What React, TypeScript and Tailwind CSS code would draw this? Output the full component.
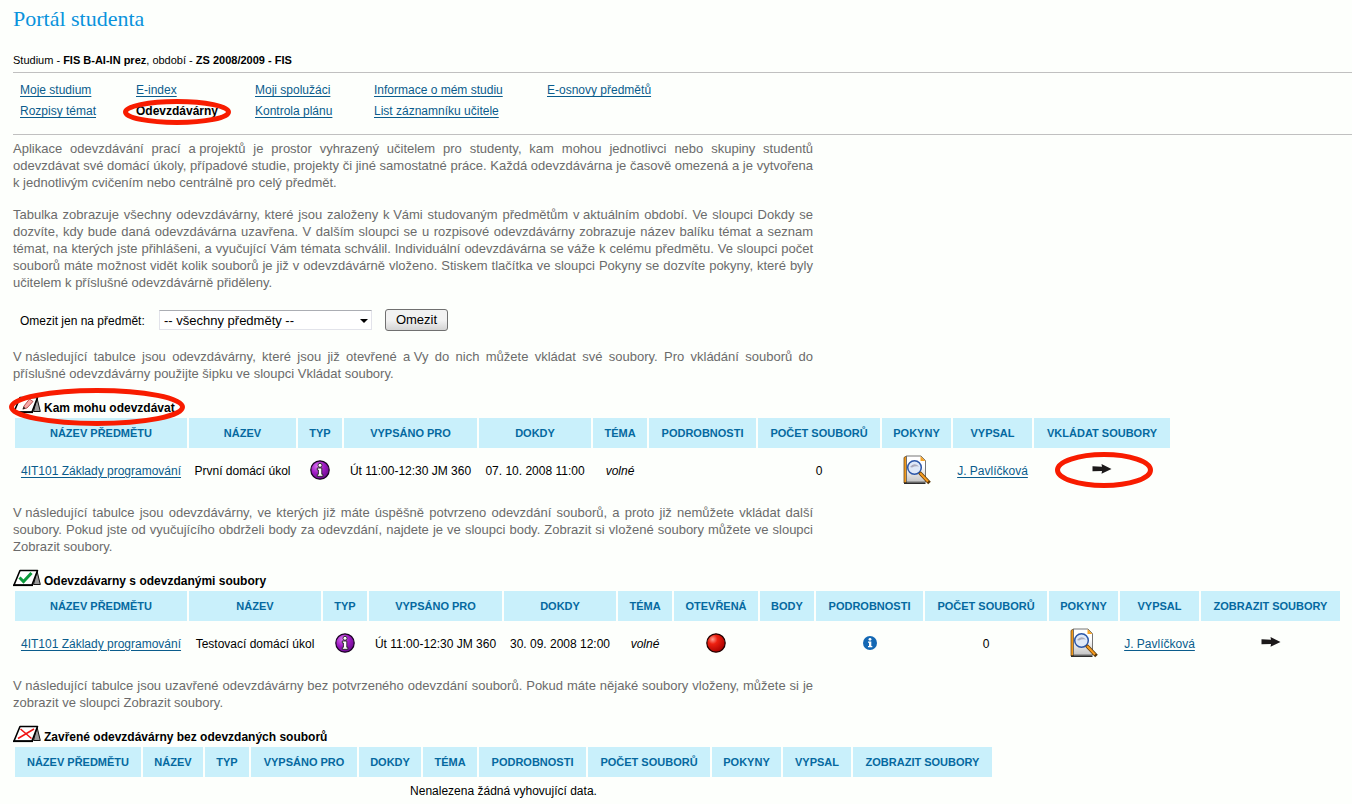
import type { ReactNode } from "react";

const OVAL = "pointer-events-none absolute overflow-visible";

function Oval({ className, rx, ry }: { className: string; rx: number; ry: number }) {
  return (
    <svg
      aria-hidden="true"
      className={`${OVAL} ${className}`}
      width={rx * 2}
      height={ry * 2}
      viewBox={`0 0 ${rx * 2} ${ry * 2}`}
    >
      <ellipse cx={rx} cy={ry} rx={rx - 2.5} ry={ry - 2.5} fill="none" stroke="#f81c00" strokeWidth="5" />
    </svg>
  );
}

function BoardIcon({ kind }: { kind: "edit" | "check" | "cross" }) {
  return (
    <svg aria-hidden="true" width="28" height="18" viewBox="0 0 28 18" className="shrink-0">
      <path d="M24 2 L27.300 15.500 L20.500 15.500 Z" fill="#9a9a9a" stroke="#111" strokeWidth="1" />
      <path d="M7 1.500 H24.500 L19 16 H1 Z" fill="#fff" stroke="#000" strokeWidth="1.600" strokeLinejoin="round" />
      <path d="M0 16.300 H20" stroke="#000" strokeWidth="1.600" />
      {kind === "check" && <path d="M6.500 8.500 L10.500 12.500 L18.500 4" fill="none" stroke="#0c9b3c" strokeWidth="3" />}
      {kind === "cross" && <path d="M7.500 4 L18.500 13.500 M21 4 L5 13.500" fill="none" stroke="#f01414" strokeWidth="1.500" />}
      {kind === "edit" && (
        <>
          <path d="M11 10 L16.500 3 L20 5.500 L14 12 L10 13 Z" fill="#f8a8a8" stroke="#a33" strokeWidth="0.800" />
          <path d="M9.500 13.500 L10.800 10.500 L12.500 12.500 Z" fill="#222" />
        </>
      )}
    </svg>
  );
}

function TypeIcon() {
  return (
    <svg role="img" aria-label="Typ" width="20" height="20" viewBox="0 0 20 20" className="inline-block">
      <defs>
        <radialGradient id="violet" cx="0.350" cy="0.300" r="0.750">
          <stop offset="0" stopColor="#d873f0" />
          <stop offset="0.500" stopColor="#a01cc4" />
          <stop offset="1" stopColor="#6a0a8c" />
        </radialGradient>
      </defs>
      <circle cx="10" cy="10" r="9.200" fill="url(#violet)" stroke="#1a0322" strokeWidth="1.200" />
      <circle cx="10" cy="5.300" r="2" fill="#fff" stroke="#222" strokeWidth="0.900" />
      <path d="M7.300 8 H11.800 V14.300 H12.900 V16.300 H7.300 V14.300 H8.400 V10 H7.300 Z" fill="#fff" stroke="#222" strokeWidth="0.900" />
    </svg>
  );
}

function RedBall() {
  return (
    <svg role="img" aria-label="Ne" width="20" height="20" viewBox="0 0 20 20" className="inline-block">
      <defs>
        <radialGradient id="red" cx="0.320" cy="0.300" r="0.750">
          <stop offset="0" stopColor="#ff9c90" />
          <stop offset="0.350" stopColor="#ee2010" />
          <stop offset="1" stopColor="#a80000" />
        </radialGradient>
      </defs>
      <circle cx="10" cy="10" r="9.200" fill="url(#red)" stroke="#200000" strokeWidth="1.200" />
    </svg>
  );
}

function InfoIcon() {
  return (
    <svg role="img" aria-label="Podrobnosti" width="14" height="14" viewBox="0 0 14 14" className="inline-block">
      <circle cx="7" cy="7" r="7" fill="#1468b4" />
      <circle cx="7" cy="3.300" r="1.400" fill="#fff" />
      <path d="M5 5.500 H8.300 V10 H9.300 V11.300 H5 V10 H6 V6.800 H5 Z" fill="#fff" />
    </svg>
  );
}

function DocIcon() {
  return (
    <svg role="img" aria-label="Pokyny" width="28" height="30" viewBox="0 0 28 30" className="inline-block">
      <defs>
        <linearGradient id="page" x1="0" y1="0" x2="0" y2="1">
          <stop offset="0.400" stopColor="#fff" />
          <stop offset="1" stopColor="#c4c4c4" />
        </linearGradient>
      </defs>
      <path d="M1 2.500 L3.500 1 V28 H1 Z" fill="#f29a1c" stroke="#6b4a1c" strokeWidth="0.800" />
      <path d="M3.500 1 H18 L22.500 5.500 V27 H3.500 Z" fill="url(#page)" stroke="#666" strokeWidth="0.900" />
      <path d="M1 28.200 H22.500" stroke="#222" strokeWidth="1.500" />
      <path d="M17.500 1 V6 H22.500 Z" fill="#f5a52a" />
      <circle cx="11.500" cy="12.500" r="6.800" fill="#dfe9f8" stroke="#2b56a8" strokeWidth="1.500" />
      <path d="M7 12 Q11 7 16 11.500 Q12 10.500 9 12.500 Z" fill="#aab" />
      <path d="M16.500 17.500 L26.500 28" stroke="#5a3708" strokeWidth="3.600" />
      <path d="M17 18 L25 26.500" stroke="#f59a1e" strokeWidth="2.200" />
    </svg>
  );
}

function ArrowIcon() {
  return (
    <svg aria-hidden="true" width="20" height="10" viewBox="0 0 20 10" className="block">
      <path d="M0.500 2.200 L10 2.700 L9.500 0 L19.500 5 L9.500 9.700 L10 7 L0.500 7.300 Z" fill="#1c191a" />
    </svg>
  );
}

/* Single-letter prepositions stay with the word that follows them. */
function Keep({ children }: { children: string }) {
  return <span className="inline-block">{children}</span>;
}

function Para({ children }: { children: ReactNode }) {
  return <p className="max-w-[800px] text-justify text-[13px] leading-[17px] text-[#6b6b6b]">{children}</p>;
}

function TextLink({ children }: { children: ReactNode }) {
  return (
    <a href="#" className="text-[#0a5c8c] underline underline-offset-2">
      {children}
    </a>
  );
}

type Column = { label: string; width: string };

function DataTable({ id, columns, children }: { id: string; columns: Column[]; children: ReactNode }) {
  return (
    <table aria-labelledby={id} className="w-0 table-fixed border-separate border-spacing-[2px] whitespace-nowrap text-center">
      <colgroup>
        {columns.map((c) => (
          <col key={c.label} className={c.width} />
        ))}
      </colgroup>
      <thead>
        <tr>
          {columns.map((c) => (
            <th key={c.label} scope="col" className="h-[30px] bg-[#c9f0fb] p-0 text-[11px] font-bold text-[#0569a0]">
              {c.label}
            </th>
          ))}
        </tr>
      </thead>
      <tbody>{children}</tbody>
    </table>
  );
}

function SectionTitle({ id, kind, circled, children }: { id: string; kind: "edit" | "check" | "cross"; circled?: boolean; children: string }) {
  return (
    <h2 id={id} className="relative mb-px flex w-fit items-center gap-[3px] font-bold leading-5">
      <BoardIcon kind={kind} />
      <span className="pt-[6px] leading-[14px]">{children}</span>
      {circled && <Oval className="-left-1 -top-[7px]" rx={88} ry={19} />}
    </h2>
  );
}

const openColumns: Column[] = [
  { label: "NÁZEV PŘEDMĚTU", width: "w-[172px]" },
  { label: "NÁZEV", width: "w-[107px]" },
  { label: "TYP", width: "w-[44px]" },
  { label: "VYPSÁNO PRO", width: "w-[133px]" },
  { label: "DOKDY", width: "w-[112px]" },
  { label: "TÉMA", width: "w-[54px]" },
  { label: "PODROBNOSTI", width: "w-[107px]" },
  { label: "POČET SOUBORŮ", width: "w-[122px]" },
  { label: "POKYNY", width: "w-[69px]" },
  { label: "VYPSAL", width: "w-[79px]" },
  { label: "VKLÁDAT SOUBORY", width: "w-[136px]" },
];

const submittedColumns: Column[] = [
  { label: "NÁZEV PŘEDMĚTU", width: "w-[172px]" },
  { label: "NÁZEV", width: "w-[132px]" },
  { label: "TYP", width: "w-[44px]" },
  { label: "VYPSÁNO PRO", width: "w-[133px]" },
  { label: "DOKDY", width: "w-[112px]" },
  { label: "TÉMA", width: "w-[54px]" },
  { label: "OTEVŘENÁ", width: "w-[84px]" },
  { label: "BODY", width: "w-[54px]" },
  { label: "PODROBNOSTI", width: "w-[107px]" },
  { label: "POČET SOUBORŮ", width: "w-[122px]" },
  { label: "POKYNY", width: "w-[69px]" },
  { label: "VYPSAL", width: "w-[79px]" },
  { label: "ZOBRAZIT SOUBORY", width: "w-[139px]" },
];

const closedColumns: Column[] = [
  { label: "NÁZEV PŘEDMĚTU", width: "w-[126px]" },
  { label: "NÁZEV", width: "w-[60px]" },
  { label: "TYP", width: "w-[44px]" },
  { label: "VYPSÁNO PRO", width: "w-[106px]" },
  { label: "DOKDY", width: "w-[62px]" },
  { label: "TÉMA", width: "w-[54px]" },
  { label: "PODROBNOSTI", width: "w-[107px]" },
  { label: "POČET SOUBORŮ", width: "w-[122px]" },
  { label: "POKYNY", width: "w-[69px]" },
  { label: "VYPSAL", width: "w-[68px]" },
  { label: "ZOBRAZIT SOUBORY", width: "w-[139px]" },
];

const CELL = "h-[42px] p-0";
const ICON_CELL = "h-[42px] p-0 pb-[2px]";

export default function App() {
  return (
    <main className="min-h-screen bg-[#fdfffc] pl-[13px] pt-[7px] font-['Liberation_Sans',Arial,sans-serif] text-[12px] leading-[17px] text-black">
      <h1 className="font-['Liberation_Serif',Georgia,serif] text-[22px] leading-6 text-[#0a93dc]">Portál studenta</h1>
      <p className="pb-1 pt-[21px] text-[11px] leading-4">
        Studium - <b>FIS B-AI-IN prez</b>, období - <b>ZS 2008/2009 - FIS</b>
      </p>

      <nav aria-label="Portál studenta" className="border-y border-[#c0c0c0] pb-3 pl-[7px] pt-[7px]">
        <ul className="grid grid-cols-[116px_119px_119px_173px_auto] leading-[21px]">
          <li><TextLink>Moje studium</TextLink></li>
          <li><TextLink>E-index</TextLink></li>
          <li><TextLink>Moji spolužáci</TextLink></li>
          <li><TextLink>Informace o mém studiu</TextLink></li>
          <li><TextLink>E-osnovy předmětů</TextLink></li>
          <li><TextLink>Rozpisy témat</TextLink></li>
          <li className="relative">
            <b>Odevzdávárny</b>
            <Oval className="-left-[13px] -top-[2px]" rx={54} ry={13} />
          </li>
          <li><TextLink>Kontrola plánu</TextLink></li>
          <li><TextLink>List záznamníku učitele</TextLink></li>
        </ul>
      </nav>

      <div className="space-y-[15px] pt-[5px]">
        <Para>
          Aplikace odevzdávání prací <Keep>a projektů</Keep> je prostor vyhrazený učitelem pro studenty, kam mohou jednotlivci nebo skupiny studentů
          odevzdávat své domácí úkoly, případové studie, projekty či jiné samostatné práce. Každá odevzdávárna je časově omezená a je vytvořena{" "}
          <Keep>k jednotlivým</Keep> cvičením nebo centrálně pro celý předmět.
        </Para>
        <Para>
          Tabulka zobrazuje všechny odevzdávárny, které jsou založeny <Keep>k Vámi</Keep> studovaným předmětům <Keep>v aktuálním</Keep> období. Ve sloupci Dokdy se
          dozvíte, kdy bude daná odevzdávárna uzavřena. V dalším sloupci se u rozpisové odevzdávárny zobrazuje název balíku témat a seznam
          témat, na kterých jste přihlášeni, a vyučující Vám témata schválil. Individuální odevzdávárna se váže k celému předmětu. Ve sloupci počet
          souborů máte možnost vidět kolik souborů je již v odevzdávárně vloženo. Stiskem tlačítka ve sloupci Pokyny se dozvíte pokyny, které byly
          učitelem k příslušné odevzdávárně přiděleny.
        </Para>
      </div>

      <form className="flex items-center pb-[17px] pl-[7px] pt-[18px]" onSubmit={(e) => e.preventDefault()}>
        <label htmlFor="subject" className="w-[139px] pt-[2px]">
          Omezit jen na předmět:
        </label>
        <div className="relative">
          <select
            id="subject"
            className="block h-5 w-[213px] appearance-none border border-[#e2e3ea] border-t-[#abadb3] bg-white pl-1 text-[13px] leading-[17px]"
          >
            <option>-- všechny předměty --</option>
          </select>
          <svg aria-hidden="true" width="8" height="4" viewBox="0 0 8 4" className="pointer-events-none absolute right-1 top-[9px]">
            <path d="M0 0 H8 L4 4 Z" fill="#000" />
          </svg>
        </div>
        <button
          type="submit"
          className="ml-[13px] h-[22px] w-[63px] rounded-[3px] border border-[#707070] bg-linear-to-b from-[#f2f2f2] from-50% to-[#d4d4d4] text-[13px] leading-[18px]"
        >
          Omezit
        </button>
      </form>

      <Para>
        <Keep>V následující</Keep> tabulce jsou odevzdávárny, které jsou již otevřené <Keep>a Vy</Keep> do nich můžete vkládat své soubory. Pro vkládání souborů do
        příslušné odevzdávárny použijte šipku ve sloupci Vkládat soubory.
      </Para>
      <section className="pb-[10px] pt-[13px]">
        <SectionTitle id="open" kind="edit" circled>Kam mohu odevzdávat</SectionTitle>
        <DataTable id="open" columns={openColumns}>
          <tr>
            <td className={CELL}><TextLink>4IT101 Základy programování</TextLink></td>
            <td className={CELL}>První domácí úkol</td>
            <td className={ICON_CELL}><TypeIcon /></td>
            <td className={CELL}>Út 11:00-12:30 JM 360</td>
            <td className={CELL}>07. 10. 2008 11:00</td>
            <td className={CELL}><i>volné</i></td>
            <td className={CELL}></td>
            <td className={CELL}>0</td>
            <td className={ICON_CELL}><DocIcon /></td>
            <td className={CELL}><TextLink>J. Pavlíčková</TextLink></td>
            <td className={ICON_CELL}>
              <a href="#" aria-label="Vkládat soubory" className="relative inline-block">
                <ArrowIcon />
                <Oval className="-left-[37px] -top-3" rx={49} ry={18} />
              </a>
            </td>
          </tr>
        </DataTable>
      </section>

      <Para>
        <Keep>V následující</Keep> tabulce jsou odevzdávárny, ve kterých již máte úspěšně potvrzeno odevzdání souborů, a proto již nemůžete vkládat další
        soubory. Pokud jste od vyučujícího obdrželi body za odevzdání, najdete je ve sloupci body. Zobrazit si vložené soubory můžete ve sloupci
        Zobrazit soubory.
      </Para>
      <section className="pb-[10px] pt-[13px]">
        <SectionTitle id="submitted" kind="check">Odevzdávarny s odevzdanými soubory</SectionTitle>
        <DataTable id="submitted" columns={submittedColumns}>
          <tr>
            <td className={CELL}><TextLink>4IT101 Základy programování</TextLink></td>
            <td className={CELL}>Testovací domácí úkol</td>
            <td className={ICON_CELL}><TypeIcon /></td>
            <td className={CELL}>Út 11:00-12:30 JM 360</td>
            <td className={CELL}>30. 09. 2008 12:00</td>
            <td className={CELL}><i>volné</i></td>
            <td className={ICON_CELL}><RedBall /></td>
            <td className={CELL}></td>
            <td className={ICON_CELL}><InfoIcon /></td>
            <td className={CELL}>0</td>
            <td className={ICON_CELL}><DocIcon /></td>
            <td className={CELL}><TextLink>J. Pavlíčková</TextLink></td>
            <td className={ICON_CELL}>
              <a href="#" aria-label="Zobrazit soubory" className="inline-block"><ArrowIcon /></a>
            </td>
          </tr>
        </DataTable>
      </section>

      <Para>
        <Keep>V následující</Keep> tabulce jsou uzavřené odevzdávárny bez potvrzeného odevzdání souborů. Pokud máte nějaké soubory vloženy, můžete si je
        zobrazit ve sloupci Zobrazit soubory.
      </Para>
      <section className="pt-[13px]">
        <SectionTitle id="closed" kind="cross">Zavřené odevzdávárny bez odevzdaných souborů</SectionTitle>
        <DataTable id="closed" columns={closedColumns}>
          <tr>
            <td colSpan={11} className="h-[24px] p-0">Nenalezena žádná vyhovující data.</td>
          </tr>
        </DataTable>
      </section>
    </main>
  );
}
